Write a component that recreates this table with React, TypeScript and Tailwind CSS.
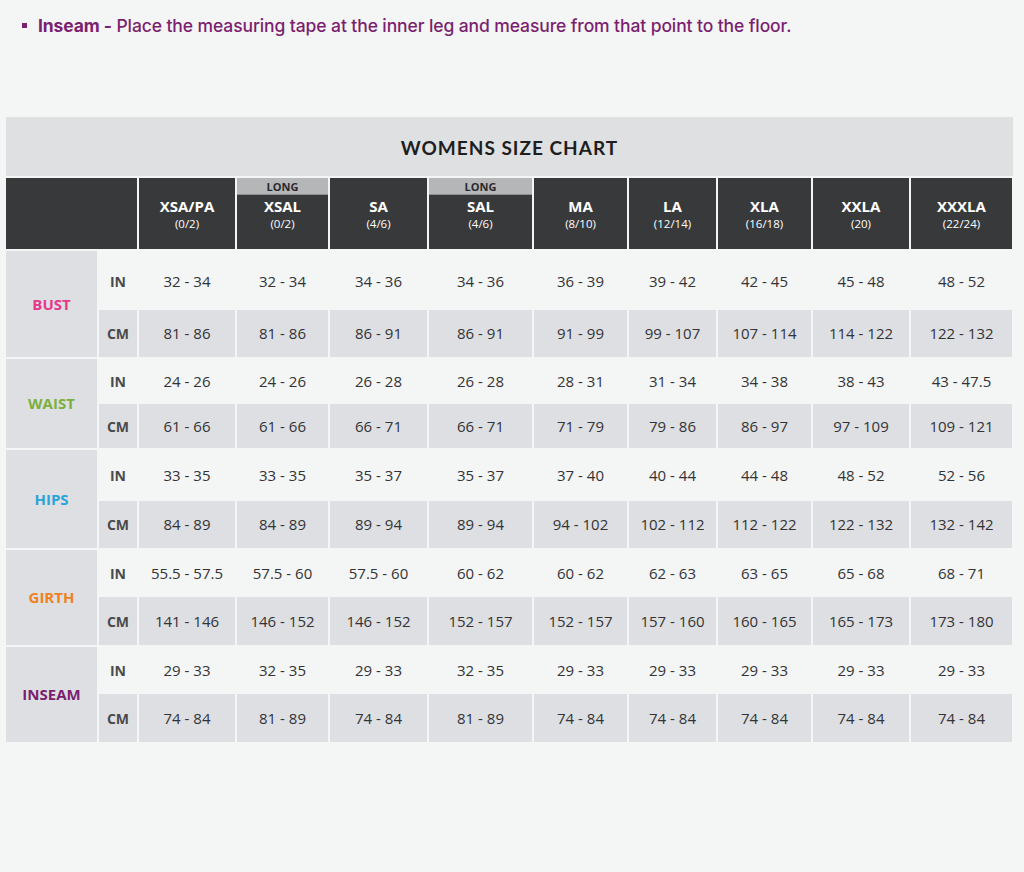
import React from "react";

type Col = { code: string; sub: string; long?: boolean };

const cols: Col[] = [
  { code: "XSA/PA", sub: "(0/2)" },
  { code: "XSAL", sub: "(0/2)", long: true },
  { code: "SA", sub: "(4/6)" },
  { code: "SAL", sub: "(4/6)", long: true },
  { code: "MA", sub: "(8/10)" },
  { code: "LA", sub: "(12/14)" },
  { code: "XLA", sub: "(16/18)" },
  { code: "XXLA", sub: "(20)" },
  { code: "XXXLA", sub: "(22/24)" },
];

type Group = {
  label: string;
  color: string;
  inH: string;
  cmH: string;
  inch: string[];
  cm: string[];
};

const groups: Group[] = [
  {
    label: "BUST",
    color: "text-[#e5398c]",
    inH: "h-[57px] pt-[3px]",
    cmH: "h-[47px]",
    inch: ["32 - 34", "32 - 34", "34 - 36", "34 - 36", "36 - 39", "39 - 42", "42 - 45", "45 - 48", "48 - 52"],
    cm: ["81 - 86", "81 - 86", "86 - 91", "86 - 91", "91 - 99", "99 - 107", "107 - 114", "114 - 122", "122 - 132"],
  },
  {
    label: "WAIST",
    color: "text-[#7bb03e]",
    inH: "h-[43px] pt-[1px]",
    cmH: "h-[44px]",
    inch: ["24 - 26", "24 - 26", "26 - 28", "26 - 28", "28 - 31", "31 - 34", "34 - 38", "38 - 43", "43 - 47.5"],
    cm: ["61 - 66", "61 - 66", "66 - 71", "66 - 71", "71 - 79", "79 - 86", "86 - 97", "97 - 109", "109 - 121"],
  },
  {
    label: "HIPS",
    color: "text-[#2ba4da]",
    inH: "h-[49px] pt-[1px]",
    cmH: "h-[47px]",
    inch: ["33 - 35", "33 - 35", "35 - 37", "35 - 37", "37 - 40", "40 - 44", "44 - 48", "48 - 52", "52 - 56"],
    cm: ["84 - 89", "84 - 89", "89 - 94", "89 - 94", "94 - 102", "102 - 112", "112 - 122", "122 - 132", "132 - 142"],
  },
  {
    label: "GIRTH",
    color: "text-[#ee821c]",
    inH: "h-[45px] pt-[1px]",
    cmH: "h-[48px]",
    inch: ["55.5 - 57.5", "57.5 - 60", "57.5 - 60", "60 - 62", "60 - 62", "62 - 63", "63 - 65", "65 - 68", "68 - 71"],
    cm: ["141 - 146", "146 - 152", "146 - 152", "152 - 157", "152 - 157", "157 - 160", "160 - 165", "165 - 173", "173 - 180"],
  },
  {
    label: "INSEAM",
    color: "text-[#7a1f70]",
    inH: "h-[45px] pt-[1px]",
    cmH: "h-[48px]",
    inch: ["29 - 33", "32 - 35", "29 - 33", "32 - 35", "29 - 33", "29 - 33", "29 - 33", "29 - 33", "29 - 33"],
    cm: ["74 - 84", "81 - 89", "74 - 84", "81 - 89", "74 - 84", "74 - 84", "74 - 84", "74 - 84", "74 - 84"],
  },
];

const gridCols =
  "grid grid-cols-[91px_38px_96px_91px_97px_103px_93px_87px_93px_96px_101px] gap-[2px]";

export default function App() {
  return (
    <div className="min-h-[872px] w-[1024px] bg-[#f4f5f5] font-['Open_Sans',sans-serif]">
      <div className="flex items-center gap-[11px] pl-[22px] pt-[13px] h-[38px] font-['Inter',sans-serif] font-medium text-[17.5px] text-[#7b1f70] leading-[24px] tracking-[-0.1px]">
        <span className="w-[5px] h-[5px] bg-[#7b1f70] shrink-0" />
        <p>
          <span className="font-bold">Inseam -</span> Place the measuring tape at the inner leg and measure from
          that point to the floor.
        </p>
      </div>

      <div className="ml-[6px] mt-[79px] w-[1007px] flex flex-col gap-[2px]">
        <div className="h-[59px] bg-[#dfe0e2] flex items-center justify-center">
          <span className="font-['Lato',sans-serif] font-bold text-[19px] tracking-[1px] text-[#1e1e20] pt-[3px]">
            WOMENS SIZE CHART
          </span>
        </div>

        <div className={gridCols}>
          <div className="col-span-2 h-[71px] bg-[#38393b]" />
          {cols.map((c) => (
            <div key={c.code} className="relative h-[71px] bg-[#38393b] flex flex-col items-center justify-center pt-[3px]">
              {c.long && (
                <div className="absolute top-0 left-0 right-0 h-[17px] bg-[#b5b6b8] border-b border-[#8e8f91] flex items-center justify-center text-[11px] font-bold text-[#2a2a2c] leading-none">
                  LONG
                </div>
              )}
              <span className="text-white font-bold text-[15px] leading-[18px]">{c.code}</span>
              <span className="text-white text-[11.5px] leading-[18px]">{c.sub}</span>
            </div>
          ))}

          {groups.map((g) => (
            <React.Fragment key={g.label}>
              <div className={`row-span-2 bg-[#dedfe2] flex items-center justify-center font-bold text-[15px] ${g.color}`}>
                {g.label}
              </div>
              <div className={`${g.inH} flex items-center justify-center font-bold text-[14px] text-[#4a4a4c]`}>IN</div>
              {g.inch.map((v, i) => (
                <div key={"i" + i} className={`${g.inH} flex items-center justify-center text-[15px] text-[#333335]`}>
                  {v}
                </div>
              ))}
              <div className={`${g.cmH} bg-[#dedfe2] flex items-center justify-center font-bold text-[14px] text-[#4a4a4c]`}>
                CM
              </div>
              {g.cm.map((v, i) => (
                <div key={"c" + i} className={`${g.cmH} bg-[#dedfe2] flex items-center justify-center text-[15px] text-[#333335]`}>
                  {v}
                </div>
              ))}
            </React.Fragment>
          ))}
        </div>
      </div>
    </div>
  );
}
